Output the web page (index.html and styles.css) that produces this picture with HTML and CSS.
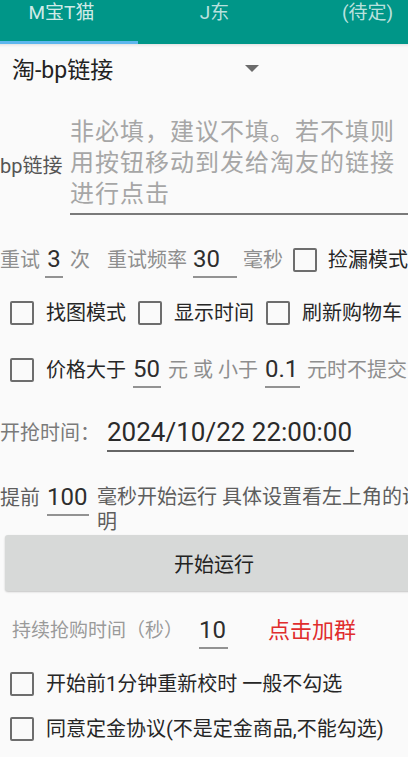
FILE: index.html
```html
<!DOCTYPE html>
<html lang="zh-CN">
<head>
<meta charset="utf-8">
<title>抢购设置</title>
<link rel="stylesheet" href="styles.css">
</head>
<body>
<nav class="tabs">
  <div class="tab active">M宝T猫</div>
  <div class="tab">J东</div>
  <div class="tab">(待定)</div>
</nav>
<main class="page">
  <div class="spinner">
    <span class="spinner-text">淘-bp链接</span>
    <svg class="spinner-arrow" width="14" height="7" viewBox="0 0 14 7"><path d="M0 0H14L7 7Z" fill="#6b6b6b"/></svg>
  </div>

  <div class="link-row">
    <label class="link-label">bp链接</label>
    <textarea class="link-input" rows="3" placeholder="非必填，建议不填。若不填则用按钮移动到发给淘友的链接进行点击"></textarea>
  </div>

  <div class="row r1">
    <span class="t muted">重试</span>
    <input class="edit e-retry" value="3">
    <span class="t muted g7">次</span>
    <span class="t muted g17">重试频率</span>
    <input class="edit e-freq g6" value="30">
    <span class="t muted g6">毫秒</span>
    <input type="checkbox" class="cb g10">
    <span class="t dark g11">捡漏模式</span>
  </div>

  <div class="row r2">
    <input type="checkbox" class="cb">
    <span class="t dark g12">找图模式</span>
    <input type="checkbox" class="cb g12">
    <span class="t dark g12">显示时间</span>
    <input type="checkbox" class="cb g12">
    <span class="t dark g12">刷新购物车</span>
  </div>

  <div class="row r3">
    <input type="checkbox" class="cb">
    <span class="t dark g12">价格大于</span>
    <input class="edit e-50 g7" value="50">
    <span class="t muted g7">元 或 小于</span>
    <input class="edit e-01 g7" value="0.1">
    <span class="t muted g7">元时不提交</span>
  </div>

  <div class="row r4">
    <span class="t label-time">开抢时间：</span>
    <input class="edit e-date g7" value="2024/10/22 22:00:00">
  </div>

  <div class="row r5">
    <span class="t advance">提前</span>
    <input class="edit e-100 g7" value="100">
    <span class="t advance advance-note g8">毫秒开始运行 具体设置看左上角的说明</span>
  </div>

  <button class="run">开始运行</button>

  <div class="row r6">
    <span class="duration-label">持续抢购时间（秒）</span>
    <input class="edit e-10" value="10">
    <span class="join">点击加群</span>
  </div>

  <div class="row r7">
    <input type="checkbox" class="cb">
    <span class="t dark g12">开始前1分钟重新校时 一般不勾选</span>
  </div>

  <div class="row r8">
    <input type="checkbox" class="cb">
    <span class="t dark g12">同意定金协议(不是定金商品,不能勾选)</span>
  </div>
</main>
</body>
</html>
```

FILE: styles.css
```css
* { box-sizing: border-box; }

html, body {
  margin: 0;
  padding: 0;
  overflow: hidden;
  background: #fafafa;
}

body {
  width: 408px;
  height: 757px;
  font-family: Roboto, "Noto Sans CJK SC", sans-serif;
  color: #222;
}

/* Tab bar */
.tabs {
  display: flex;
  width: 459px;
  height: 44px;
  margin-left: -15px;
  background: #009688;
  box-shadow: 0 1px 3px rgba(0, 0, 0, 0.12);
}

.tab {
  flex: 1;
  text-align: center;
  font-size: 19px;
  line-height: 26px;
  color: rgba(255, 255, 255, 0.74);
}

.tab.active {
  color: rgba(255, 255, 255, 0.82);
  border-bottom: 3px solid #5db7ee;
}

/* Spinner */
.spinner {
  display: flex;
  align-items: center;
  width: 271px;
  height: 48px;
  padding: 0 12px;
}

.spinner-text {
  font-size: 23px;
  color: #222;
}

.spinner-arrow {
  margin-left: auto;
}

/* Link input */
.link-row {
  display: flex;
  align-items: center;
  margin-top: 25px;
}

.link-label {
  width: 70px;
  flex-shrink: 0;
  font-size: 20px;
  line-height: 24px;
  color: #555;
}

.link-input {
  flex: 1;
  min-width: 0;
  height: 98px;
  padding: 0 0 3px;
  border: 0;
  border-bottom: 2px solid #7a7a7a;
  border-radius: 0;
  background: transparent;
  font: inherit;
  font-size: 24px;
  letter-spacing: 1px;
  line-height: 31px;
  color: #333;
  resize: none;
  overflow: hidden;
  outline: none;
}

.link-input::placeholder {
  color: #a6a6a6;
  opacity: 1;
}

/* Generic rows */
.row {
  display: flex;
  align-items: center;
  white-space: nowrap;
}

.row > * { flex-shrink: 0; }

.t {
  font-size: 20px;
  line-height: 24px;
}

.muted { color: #8e8e8e; }
.dark { color: #262626; }

.edit {
  height: 36px;
  padding: 0;
  border: 0;
  border-bottom: 2px solid #929292;
  border-radius: 0;
  background: transparent;
  font: inherit;
  font-size: 24px;
  color: #2e2e2e;
  outline: none;
}

.cb {
  -webkit-appearance: none;
  appearance: none;
  margin: 0;
  width: 24px;
  height: 24px;
  border: 2px solid #6d6d6d;
  border-radius: 2px;
  background: transparent;
}

/* spacing helpers (after components so they win) */
.g6 { margin-left: 6px; }
.g7 { margin-left: 7px; }
.g8 { margin-left: 8px; }
.g10 { margin-left: 10px; }
.g11 { margin-left: 11px; }
.g12 { margin-left: 12px; }
.g17 { margin-left: 17px; }

.r1 { height: 42px; margin-top: 24px; }
.r2 { height: 42px; margin-top: 11px; padding-left: 10px; }
.r3 { height: 42px; margin-top: 15px; padding-left: 10px; }
.r4 { height: 40px; margin-top: 22px; }
.r5 { align-items: flex-start; margin-top: 27px; }
.r6 { height: 40px; margin-top: 20px; padding-left: 12px; }
.r7 { height: 40px; margin-top: 13px; padding-left: 10px; }
.r8 { height: 40px; margin-top: 5px; padding-left: 10px; }

.e-retry { width: 18px; margin-left: 5px; text-align: center; }
.e-freq { width: 44px; }
.e-50 { width: 28px; }
.e-01 { width: 35px; }

.label-time { color: #7a7a7a; }

.e-date {
  width: 247px;
  height: 38px;
  font-size: 26px;
  color: #2a2a2a;
  border-bottom-color: #666;
}

.advance {
  color: #5e5e5e;
  line-height: 36px;
}

.e-100 { width: 42px; }

.advance-note {
  width: 340px;
  padding-top: 5px;
  line-height: 25px;
  white-space: normal;
}

/* Run button */
.run {
  display: block;
  width: 418px;
  height: 56px;
  margin: 0 0 0 5px;
  padding: 0;
  border: 0;
  border-radius: 3px;
  background: #d7d9d8;
  box-shadow: 0 1px 2px rgba(0, 0, 0, 0.22);
  font: inherit;
  font-size: 20px;
  color: #222;
}

.duration-label {
  font-size: 19px;
  line-height: 24px;
  color: #9a9a9a;
}

.e-10 { width: 29px; margin-left: 16px; }

.join {
  margin-left: 40px;
  font-size: 22px;
  line-height: 26px;
  color: #e02d2d;
}
```
